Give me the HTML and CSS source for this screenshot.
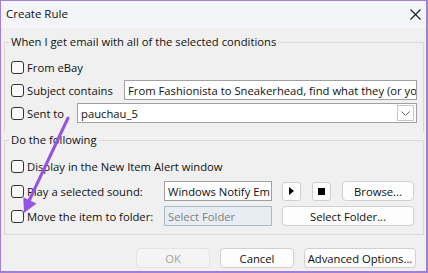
FILE: index.html
```html
<!DOCTYPE html>
<html>
<head>
<meta charset="utf-8">
<link rel="stylesheet" href="styles.css">
</head>
<body>
<div class="window">
  <div class="titlebar">
    <span class="title">Create Rule</span>
    <svg class="close" width="11" height="11" viewBox="0 0 11 11"><path d="M0.5 0.5L10.5 10.5M10.5 0.5L0.5 10.5" stroke="#1a1a1a" stroke-width="1.1" fill="none"/></svg>
  </div>
  <div class="content">
    <fieldset class="group group-top">
      <legend>When I get email with all of the selected conditions</legend>
      <div class="rows rows-top">
        <div class="row"><span class="check"></span><span class="label">From eBay</span></div>
        <div class="row"><span class="check"></span><span class="label w-subject">Subject contains</span><div class="input grow">From Fashionista to Sneakerhead, find what they (or yo</div></div>
        <div class="row"><span class="check"></span><span class="label w-sent">Sent to</span><div class="input combo grow"><span class="val">pauchau_5</span><span class="dd"><svg width="9" height="5" viewBox="0 0 9 5"><path d="M0.5 0.5L4.5 4.5L8.5 0.5" stroke="#606060" stroke-width="1" fill="none"/></svg></span></div></div>
      </div>
    </fieldset>
    <fieldset class="group">
      <legend>Do the following</legend>
      <div class="rows rows-bottom">
        <div class="row"><span class="check"></span><span class="label">Display in the New Item Alert window</span></div>
        <div class="row"><span class="check"></span><span class="label w-action">Play a selected sound:</span><div class="input short">Windows Notify Em</div><button class="btn icon first"><svg width="5" height="8" viewBox="0 0 5 8"><path d="M0 0L5 4L0 8Z" fill="#000"/></svg></button><button class="btn icon"><svg width="7" height="7" viewBox="0 0 7 7"><rect width="7" height="7" fill="#000"/></svg></button><button class="btn browse">Browse...</button></div>
        <div class="row"><span class="check"></span><span class="label w-action">Move the item to folder:</span><div class="input short disabled">Select Folder</div><button class="btn first folder">Select Folder...</button></div>
      </div>
    </fieldset>
    <div class="actions">
      <button class="btn action off">OK</button>
      <button class="btn action">Cancel</button>
      <button class="btn action wide">Advanced Options...</button>
    </div>
  </div>
  <svg class="arrow" width="428" height="273" viewBox="0 0 428 273">
    <line x1="68" y1="118" x2="28" y2="203" stroke="#9553e3" stroke-width="3" stroke-linecap="round"/>
    <path d="M24 213L36.5 203.5L23.3 197.2Z" fill="#9553e3"/>
  </svg>
</div>
</body>
</html>
```

FILE: styles.css
```css
* { box-sizing: border-box; }
html, body { margin: 0; padding: 0; }
body {
  width: 428px;
  height: 273px;
  overflow: hidden;
  font-family: "Open Sans", "Noto Sans", sans-serif;
  font-size: 11.25px;
  color: #111;
}
.window {
  position: relative;
  width: 428px;
  height: 273px;
  border-style: solid;
  border-color: #a17ed8;
  border-width: 1px 2px 2px 1px;
  background: #f0f0f0;
  display: flex;
  flex-direction: column;
}
.titlebar {
  height: 27px;
  flex: none;
  display: flex;
  align-items: center;
  padding: 0 5px 2px 5px;
  background: #f3f5f8;
}
.title {
  font-size: 11.5px;
  color: #111;
}
.close {
  margin-left: auto;
  margin-top: 2px;
}
.content {
  flex: 1;
  padding-top: 6px;
  display: flex;
  flex-direction: column;
}
.group {
  margin: 0 2px 0 3px;
  border: 1px solid #d9d9d9;
  padding: 0 6px;
  min-width: 0;
}
.group-top { border-bottom: none; }
legend {
  line-height: 16px;
  padding: 0 2px;
  margin-left: -2px;
  color: #111;
}
.rows {
  display: flex;
  flex-direction: column;
}
.rows-top { padding: 7px 0 9px; gap: 3px; }
.rows-bottom { padding: 8px 0 8px; gap: 5px; }
.row {
  height: 20px;
  display: flex;
  align-items: center;
}
.check {
  width: 13px;
  height: 13px;
  flex: none;
  border: 1px solid #333;
  border-radius: 3px;
  background: #fbfbfb;
}
.label {
  margin-left: 3px;
  white-space: nowrap;
  flex: none;
}
.w-subject { width: 97px; }
.w-sent { width: 50px; }
.w-action { width: 137px; }
.input {
  height: 20px;
  border: 1px solid #a0a0a0;
  background: #fff;
  padding: 0 3px;
  display: flex;
  align-items: center;
  white-space: nowrap;
  overflow: hidden;
  min-width: 0;
}
.grow { flex: 1; }
.combo { padding-right: 2px; }
.combo .val { flex: 1; }
.dd {
  width: 17px;
  height: 16px;
  flex: none;
  border: 1px solid #c6c6c6;
  display: flex;
  align-items: center;
  justify-content: center;
}
.short { width: 108px; flex: none; }
.input.disabled {
  background: #e8edf3;
  border-color: #a8b8ca;
  color: #7f7f7f;
}
.btn {
  font-family: inherit;
  font-size: 11.25px;
  color: #111;
  height: 20px;
  padding: 0;
  border: 1px solid #d0d0d0;
  border-radius: 4px;
  background: #fdfdfd;
  display: flex;
  align-items: center;
  justify-content: center;
  flex: none;
}
.icon { width: 19px; height: 19px; margin-left: 11px; border-radius: 3px; }
.first { margin-left: 10px; }
.browse { width: 72px; margin-left: 11px; }
.folder { width: 132px; }
.actions {
  margin-top: 13px;
  display: flex;
  justify-content: flex-end;
  gap: 10px;
  padding-right: 10px;
}
.action { width: 74px; }
.wide { width: 112px; }
.off {
  background: #f4f4f4;
  border-color: #e4e4e4;
  color: #a3a3a3;
}
.arrow {
  position: absolute;
  left: -1px;
  top: -1px;
  pointer-events: none;
}
```
